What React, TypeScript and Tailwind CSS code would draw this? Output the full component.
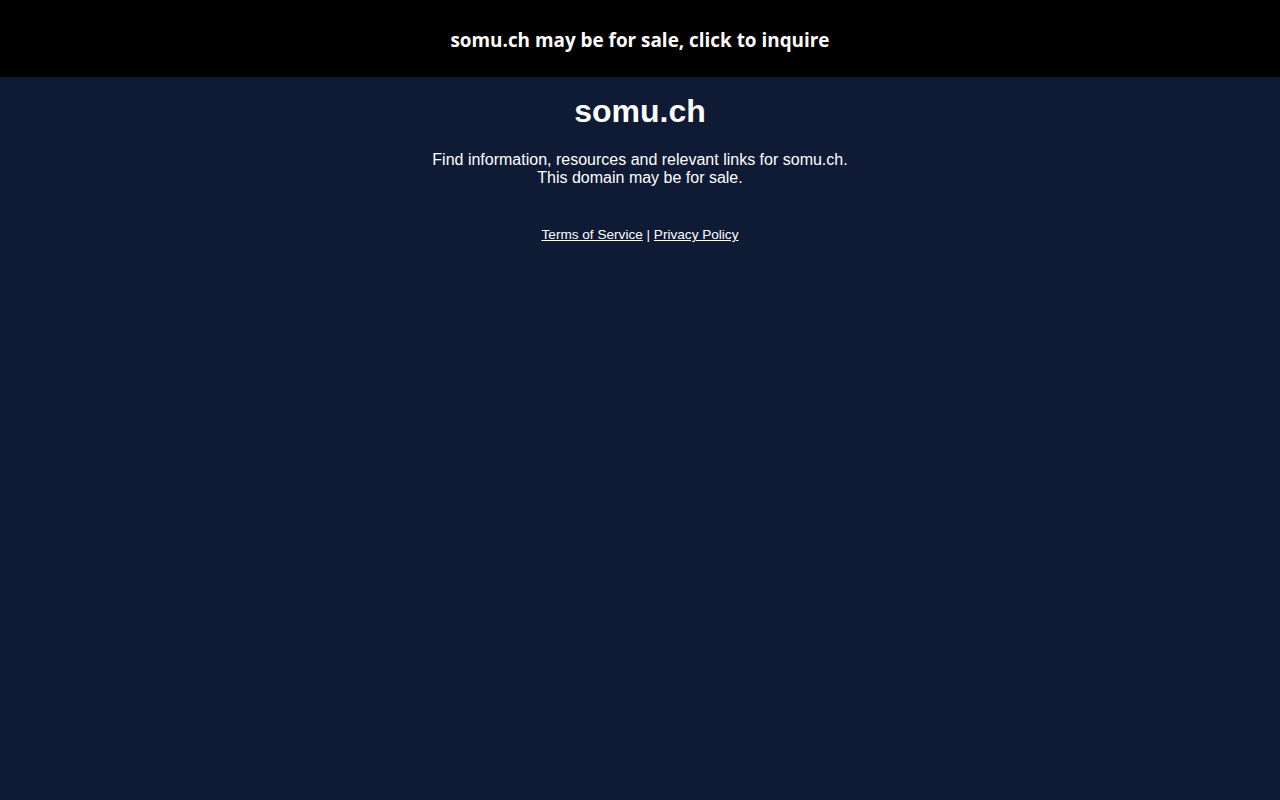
export default function App() {
  return (
    <div className="min-h-[800px] bg-[#0f1a35] text-white" style={{ fontFamily: '"Liberation Sans", Arial, sans-serif' }}>
      <div className="h-[77px] bg-black flex items-center justify-center pt-[3px]">
        <a href="#" className="text-[18.9px] font-bold text-white" style={{ fontFamily: '"Open Sans", "Noto Sans", sans-serif' }}>
          somu.ch may be for sale, click to inquire
        </a>
      </div>
      <div className="flex flex-col items-center text-center">
        <h1 className="mt-[16px] text-[32px] font-bold leading-[37px]">somu.ch</h1>
        <p className="mt-[21px] text-[16px] leading-[18px]">
          Find information, resources and relevant links for somu.ch.
          <br />
          This domain may be for sale.
        </p>
        <div className="mt-[40px] text-[13.6px] leading-[16px]">
          <a href="#" className="underline">Terms of Service</a> | <a href="#" className="underline">Privacy Policy</a>
        </div>
      </div>
    </div>
  );
}
